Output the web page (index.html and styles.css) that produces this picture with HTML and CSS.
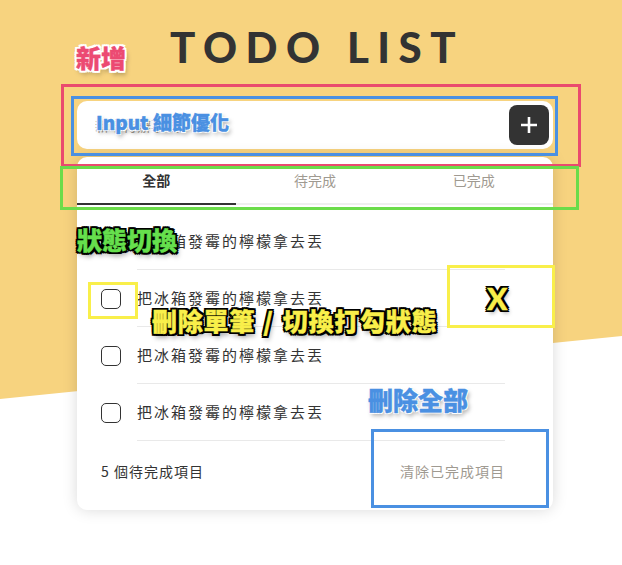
FILE: index.html
```html
<!DOCTYPE html>
<html lang="zh-Hant">
<head>
    <meta charset="UTF-8">
    <meta name="viewport" content="width=device-width, initial-scale=1.0">
    <title>TODO LIST</title>
    <link rel="stylesheet" href="styles.css">
</head>
<body>
    <div class="backdrop"></div>

    <div class="app">
        <h1 class="title">TODO LIST</h1>

        <div class="add">
            <input class="add-input" type="text" placeholder="新增待辦事項">
            <button class="add-btn" aria-label="add">
                <svg width="18" height="18" viewBox="0 0 18 18"><path d="M9 1v16M1 9h16" stroke="#fff" stroke-width="2.6"/></svg>
            </button>
        </div>

        <div class="card">
            <div class="tabs">
                <div class="tab active">全部</div>
                <div class="tab">待完成</div>
                <div class="tab">已完成</div>
            </div>

            <ul class="list">
                <li class="item"><span class="check"></span><span class="text">把冰箱發霉的檸檬拿去丟</span></li>
                <li class="item"><span class="check"></span><span class="text">把冰箱發霉的檸檬拿去丟</span></li>
                <li class="item"><span class="check"></span><span class="text">把冰箱發霉的檸檬拿去丟</span></li>
                <li class="item"><span class="check"></span><span class="text">把冰箱發霉的檸檬拿去丟</span></li>
            </ul>

            <div class="footer">
                <span>5 個待完成項目</span>
                <span class="clear">清除已完成項目</span>
            </div>
        </div>
    </div>

    <!-- annotations -->
    <div class="note note-add">新增</div>
    <div class="frame frame-red"></div>
    <div class="frame frame-blue"></div>
    <div class="note note-input">Input 細節優化</div>
    <div class="frame frame-green"></div>
    <div class="note note-tab">狀態切換</div>
    <div class="frame frame-check"></div>
    <div class="frame frame-x"></div>
    <div class="note note-x">X</div>
    <div class="note note-item">刪除單筆<span class="slash">/</span>切換打勾狀態</div>
    <div class="note note-all">刪除全部</div>
    <div class="frame frame-all"></div>
</body>
</html>
```

FILE: styles.css
```css
body {
    margin: 0;
    min-height: 565px;
    position: relative;
    background: #fff;
    font-family: 'Noto Sans CJK TC', 'Noto Sans', sans-serif;
    color: #333;
    overflow: hidden;
}
.backdrop {
    position: absolute;
    top: 0;
    left: 0;
    width: 100%;
    height: 400px;
    background: #f7d37f;
    clip-path: polygon(0 0, 100% 0, 100% 336px, 0 399px);
    z-index: 0;
}
.app {
    position: relative;
    z-index: 1;
    width: 476px;
    margin-left: 77px;
    padding-top: 22px;
}
.title {
    margin: 0 0 29px;
    font-family: 'Lato', sans-serif;
    font-weight: 900;
    font-size: 42px;
    line-height: 50px;
    letter-spacing: 8.5px;
    text-align: center;
    padding-left: 4px;
    color: #333;
}
.add {
    display: flex;
    align-items: center;
    background: #fff;
    border-radius: 10px;
    height: 48px;
    padding: 0 4px 0 16px;
    box-sizing: border-box;
    margin-bottom: 8px;
}
.add-input {
    flex: 1;
    border: none;
    outline: none;
    font-family: inherit;
    font-size: 14px;
    background: transparent;
}
.add-input::placeholder {
    color: #9f9a91;
}
.add-btn {
    width: 40px;
    height: 40px;
    border: none;
    border-radius: 8px;
    background: #333;
    display: flex;
    align-items: center;
    justify-content: center;
    padding: 0;
}
.card {
    background: #fff;
    border-radius: 10px;
    box-shadow: 0 0 15px rgba(0, 0, 0, 0.15);
}
.tabs {
    display: flex;
}
.tab {
    flex: 1;
    text-align: center;
    font-size: 14px;
    line-height: 20px;
    padding: 13px 0 13px;
    color: #9f9a91;
    border-bottom: 2px solid #efefef;
}
.tab.active {
    color: #333;
    font-weight: bold;
    border-bottom-color: #333;
}
.list {
    list-style: none;
    margin: 0;
    padding: 8px 48px 0 24px;
}
.item {
    display: flex;
    align-items: center;
}
.check {
    width: 20px;
    height: 20px;
    box-sizing: border-box;
    border: 1px solid #333;
    border-radius: 5px;
    margin-right: 16px;
    flex-shrink: 0;
}
.text {
    flex: 1;
    font-size: 15px;
    line-height: 20px;
    letter-spacing: 2px;
    padding: 18px 0;
    border-bottom: 1px solid #e9e9e9;
}
.footer {
    display: flex;
    justify-content: space-between;
    font-size: 14px;
    line-height: 20px;
    letter-spacing: 1px;
    padding: 20px 48px 29px 24px;
}
.clear {
    color: #9f9a91;
}

/* annotation layer */
.note {
    position: absolute;
    z-index: 5;
    font-weight: 900;
    white-space: nowrap;
    line-height: 1;
    -webkit-text-stroke: 0.4px currentColor;
}
.frame {
    position: absolute;
    z-index: 4;
    box-sizing: border-box;
    border: 3px solid;
}
.note-add {
    left: 76px;
    top: 45px;
    font-size: 25px;
    color: #ec4a72;
    text-shadow: -2px -2px 0 #fff, 2px -2px 0 #fff, -2px 2px 0 #fff, 2px 2px 0 #fff,
        0 -2px 0 #fff, 0 2px 0 #fff, -2px 0 0 #fff, 2px 0 0 #fff, 2px 4px 5px rgba(0, 0, 0, 0.35);
}
.note-input {
    left: 96px;
    top: 112px;
    font-size: 19px;
    color: #4a90e2;
    text-shadow: -1px -1px 0 #fff, 1px -1px 0 #fff, -1px 1px 0 #fff, 1px 1px 0 #fff,
        2px 3px 4px rgba(0, 0, 0, 0.35);
}
.note-tab {
    left: 77px;
    top: 227px;
    font-size: 25px;
    color: #66e04d;
    text-shadow: -2px -2px 0 #000, 2px -2px 0 #000, -2px 2px 0 #000, 2px 2px 0 #000,
        0 -2px 0 #000, 0 2px 0 #000, -2px 0 0 #000, 2px 0 0 #000, 2px 4px 5px rgba(0, 0, 0, 0.4);
}
.note-item {
    left: 152px;
    top: 308px;
    font-size: 25px;
    color: #f9ef4a;
    letter-spacing: 0.8px;
    text-shadow: -2px -2px 0 #000, 2px -2px 0 #000, -2px 2px 0 #000, 2px 2px 0 #000,
        0 -2px 0 #000, 0 2px 0 #000, -2px 0 0 #000, 2px 0 0 #000, 2px 4px 5px rgba(0, 0, 0, 0.4);
}
.slash {
    margin: 0 9px 0 8px;
}
.note-x {
    left: 487px;
    top: 283px;
    font-family: 'Lato', sans-serif;
    font-size: 30px;
    color: #f9ef4a;
    text-shadow: -2px -2px 0 #000, 2px -2px 0 #000, -2px 2px 0 #000, 2px 2px 0 #000,
        0 -2px 0 #000, 0 2px 0 #000, -2px 0 0 #000, 2px 0 0 #000, 2px 3px 4px rgba(0, 0, 0, 0.4);
}
.note-all {
    left: 368px;
    top: 387px;
    font-size: 25px;
    color: #4a90e2;
    text-shadow: -1px -1px 0 #fff, 1px -1px 0 #fff, -1px 1px 0 #fff, 1px 1px 0 #fff,
        2px 3px 4px rgba(0, 0, 0, 0.35);
}
.frame-red {
    left: 61px;
    top: 84px;
    width: 520px;
    height: 83px;
    border-color: #ea4a6e;
}
.frame-blue {
    left: 71px;
    top: 96px;
    width: 487px;
    height: 60px;
    border-color: #4a90e2;
}
.frame-green {
    left: 60px;
    top: 166px;
    width: 519px;
    height: 44px;
    border-color: #6bdc4a;
}
.frame-check {
    left: 88px;
    top: 282px;
    width: 50px;
    height: 37px;
    border-color: #f9ef4a;
}
.frame-x {
    left: 447px;
    top: 265px;
    width: 108px;
    height: 63px;
    border-color: #f9ef4a;
}
.frame-all {
    left: 371px;
    top: 429px;
    width: 178px;
    height: 79px;
    border-color: #4a90e2;
}
```
